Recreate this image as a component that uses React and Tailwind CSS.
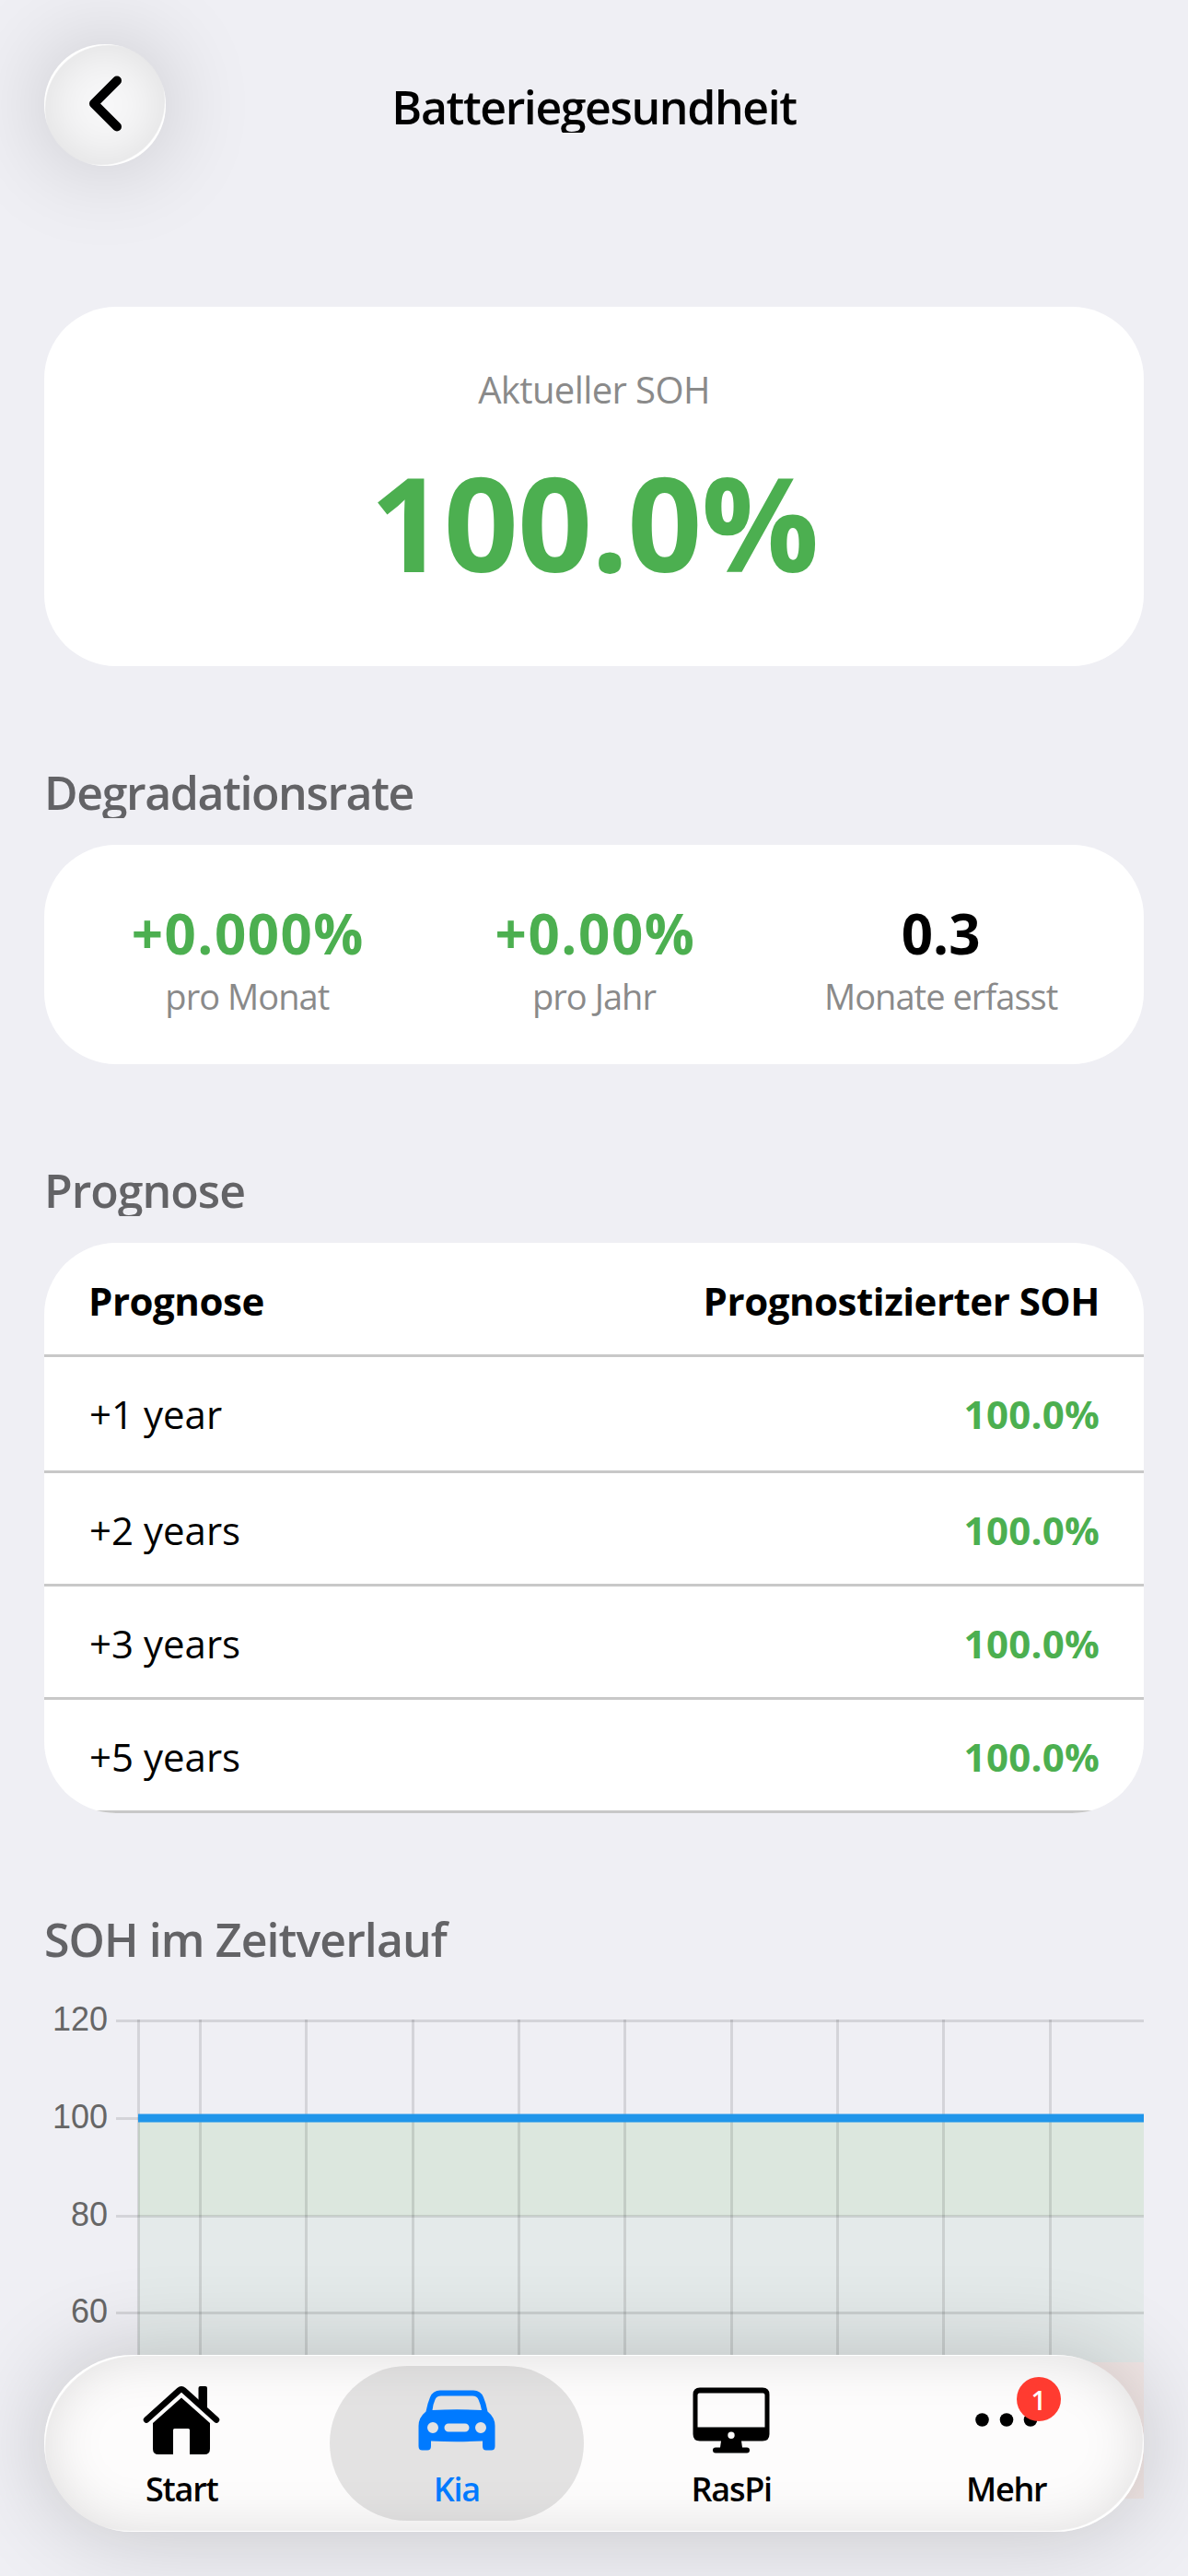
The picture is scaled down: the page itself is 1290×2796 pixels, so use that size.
const stats = [
  { value: '+0.000%', label: 'pro Monat', valueClass: 'text-[#4caf50] tracking-[0.025em] pl-[2px]' },
  { value: '+0.00%', label: 'pro Jahr', valueClass: 'text-[#4caf50] tracking-[0.026em] pl-[3px]' },
  { value: '0.3', label: 'Monate erfasst', valueClass: 'text-black' },
];

const forecast = [
  { term: '+1 year', soh: '100.0%', rowClass: 'h-[126px]' },
  { term: '+2 years', soh: '100.0%', rowClass: 'h-[123px] pt-[2px]' },
  { term: '+3 years', soh: '100.0%', rowClass: 'h-[123px] pt-[2px]' },
  { term: '+5 years', soh: '100.0%', rowClass: 'h-[123px] pt-[2px]' },
];

const yTicks = [
  { label: '120', y: 31.5 },
  { label: '100', y: 137.5 },
  { label: '80', y: 243.5 },
  { label: '60', y: 348.5 },
];

const xLines = [102.5, 169.5, 284.5, 400.5, 515.5, 630.5, 746.5, 861.5, 976.5, 1092.5];

function SectionTitle({ children, tracking = 'tracking-[-0.02em]' }) {
  return (
    <h2 className={`mt-[109px] mb-[29px] h-[56px] overflow-hidden text-[50px] font-semibold leading-[56px] text-[#636366] ${tracking}`}>
      {children}
    </h2>
  );
}

function SohChart() {
  return (
    <svg className="block" width="1194" height="550" viewBox="0 0 1194 550">
      {/* good / fair / poor zones */}
      <rect x="102" y="137" width="1092" height="106" fill="#dce7de" />
      <rect x="102" y="243" width="1092" height="159" fill="#e4eaea" />
      <rect x="102" y="402" width="1092" height="148" fill="#f2e7e6" />
      <g stroke="#000" strokeOpacity="0.11" strokeWidth="3">
        {yTicks.map((t) => (
          <line key={t.label} x1="78" x2="1194" y1={t.y} y2={t.y} />
        ))}
        {xLines.map((x) => (
          <line key={x} x1={x} x2={x} y1="30" y2="550" />
        ))}
      </g>
      {yTicks.map((t) => (
        <text
          key={t.label}
          x="69"
          y={t.y + 10}
          textAnchor="end"
          fill="#666"
          className="font-['Liberation_Sans',Arial,sans-serif] text-[36px]"
        >
          {t.label}
        </text>
      ))}
      <rect x="102" y="132.5" width="1092" height="9" fill="#2196ea" />
    </svg>
  );
}

function HomeIcon() {
  return (
    <svg width="84" height="76" viewBox="0 0 84 76">
      <path d="M4 37.500 L39.500 5.500 Q42 3.200 44.500 5.500 L80 37.500" fill="none" stroke="#000" strokeWidth="6.500" strokeLinecap="round" strokeLinejoin="round" />
      <path d="M60.500 3 Q60.500 1 62.500 1 H68 Q70 1 70 3 V28 L60.500 19 Z" />
      <path d="M42 13.500 L73 41 V69 Q73 75 67 75 H51 V48.500 Q51 47 49.500 47 H34.500 Q33 47 33 48.500 V75 H17 Q11 75 11 69 V41 Z" />
    </svg>
  );
}

function CarIcon() {
  return (
    <svg width="84" height="66" viewBox="0 0 84 66">
      <path
        fill="currentColor"
        fillRule="evenodd"
        d="M24 .5 H60 Q68 .5 71 8 Q74 15 75.500 23.500 Q83.500 30 83.500 39 V61 Q83.500 65.500 79.500 65.500 H74 Q70 65.500 70 61 V55.500 Q42 57 14 55.500 V61 Q14 65.500 10 65.500 H4.500 Q.5 65.500 .5 61 V39 Q.5 30 8.500 23.500 Q10 15 13 8 Q16 .5 24 .5 Z M25 6.500 Q20 6.500 18.500 10.500 Q16 16 15.500 22 Q42 20.500 69 22 Q68 16 65.500 10.500 Q64 6.500 59 6.500 Z M16 35 A6 6 0 1 0 16 47 A6 6 0 1 0 16 35 Z M68 35 A6 6 0 1 0 68 47 A6 6 0 1 0 68 35 Z M33 36.500 A4.500 4.500 0 0 0 33 45.500 H51 A4.500 4.500 0 0 0 51 36.500 Z"
      />
    </svg>
  );
}

function MonitorIcon() {
  return (
    <svg width="84" height="72" viewBox="0 0 84 72">
      <path
        fillRule="evenodd"
        d="M8 .5 H76 Q83.500 .5 83.500 8 V51 Q83.500 58.500 76 58.500 H53 L54 65.500 H59 Q62 65.500 62 68.500 Q62 71.500 59 71.500 H25 Q22 71.500 22 68.500 Q22 65.500 25 65.500 H30 L31 58.500 H8 Q.5 58.500 .5 51 V8 Q.5 .5 8 .5 Z M7.500 6.500 Q5.500 6.500 5.500 8.500 V43.500 H78.500 V8.500 Q78.500 6.500 76.500 6.500 Z M42 48.500 A3.700 3.700 0 1 0 42 55.900 A3.700 3.700 0 1 0 42 48.500 Z"
      />
    </svg>
  );
}

function MoreIcon() {
  return (
    <svg width="84" height="72" viewBox="0 0 84 72">
      <circle cx="15.500" cy="35.500" r="7.300" />
      <circle cx="42" cy="35.500" r="7.300" />
      <circle cx="68" cy="35.500" r="7.300" />
    </svg>
  );
}

const tabs = [
  { label: 'Start', icon: <HomeIcon /> },
  { label: 'Kia', icon: <CarIcon />, active: true },
  { label: 'RasPi', icon: <MonitorIcon /> },
  { label: 'Mehr', icon: <MoreIcon />, badge: '1' },
];

function TabBar() {
  return (
    <nav className="absolute bottom-[48px] left-[48px] flex h-[192px] w-[1194px] rounded-full bg-[#fdfcfc] shadow-[inset_4px_4px_1px_-3px_#fff,inset_-4px_-4px_1px_-3px_#fff,inset_0_0_60px_rgba(0,0,0,0.13),0_0_100px_rgba(0,0,0,0.19)]">
      {tabs.map((tab) => (
        <a
          key={tab.label}
          className={
            tab.active
              ? 'mx-[11px] my-[12px] flex flex-1 flex-col items-center rounded-full bg-black/10 text-[#007aff]'
              : 'mx-[11px] my-[12px] flex flex-1 flex-col items-center text-black'
          }
        >
          <span className="relative mt-[20px] flex h-[78px] items-center">
            {tab.icon}
            {tab.badge && (
              <span className="absolute -top-[8px] left-[53px] flex h-[48px] w-[48px] items-center justify-center rounded-full bg-[#ff3b30] text-[29px] font-semibold leading-none text-white">
                {tab.badge}
              </span>
            )}
          </span>
          <span className="mt-[12px] text-[36px] font-semibold leading-[48px] tracking-[-0.035em]">{tab.label}</span>
        </a>
      ))}
    </nav>
  );
}

function App() {
  return (
    <div className="relative h-[2796px] w-[1290px] overflow-hidden bg-[#efeff4] px-[48px] font-['Open_Sans','Noto_Sans',sans-serif] text-black">
      <header className="grid h-[180px] grid-cols-[132px_1fr_132px] pt-[48px]">
        <button className="flex h-[132px] w-[132px] items-center justify-center rounded-full bg-[#f8f8f9] shadow-[inset_4px_4px_1px_-3px_#fff,inset_-4px_-4px_1px_-3px_#fff,inset_0_0_60px_rgba(0,0,0,0.11),0_0_100px_rgba(0,0,0,0.18)]">
          <svg width="60" height="72" viewBox="0 0 60 72" fill="none">
            <path d="M43 9.500 L18 34.500 L43 59.500" stroke="#000" strokeWidth="10" strokeLinecap="round" strokeLinejoin="round" />
          </svg>
        </button>
        <h1 className="mt-[40px] h-[56px] overflow-hidden text-center text-[50px] font-semibold leading-[56px] tracking-[-0.028em]">
          Batteriegesundheit
        </h1>
      </header>

      <main>
        <section className="mt-[153px] flex h-[390px] flex-col items-center rounded-[78px] bg-white pt-[62px]">
          <p className="text-[40px] leading-[56px] tracking-[-0.015em] text-[#8a8a8a]">Aktueller SOH</p>
          <p className="mt-[30px] text-[142px] font-bold leading-[170px] tracking-[-0.008em] text-[#4caf50]">100.0%</p>
        </section>

        <SectionTitle tracking="tracking-[-0.028em]">Degradationsrate</SectionTitle>
        <section className="grid h-[238px] grid-cols-3 rounded-[78px] bg-white px-[32px] pt-[61px] text-center">
          {stats.map((s) => (
            <div key={s.label}>
              <p className={`text-[60px] font-bold leading-[70px] ${s.valueClass}`}>{s.value}</p>
              <p className="mt-[7px] text-[38px] leading-[52px] tracking-[-0.025em] text-[#8a8a8a]">{s.label}</p>
            </div>
          ))}
        </section>

        <SectionTitle>Prognose</SectionTitle>
        <section className="overflow-hidden rounded-[78px] bg-white text-[42px]">
          <div className="flex h-[124px] items-center justify-between border-b-[3px] border-[#c8c8c8] px-[48px] pt-[4px] font-bold tracking-[-0.011em]">
            <span>Prognose</span>
            <span>Prognostizierter SOH</span>
          </div>
          {forecast.map((row) => (
            <div key={row.term} className={`flex items-center justify-between border-b-[3px] border-[#c8c8c8] pr-[48px] pl-[49px] ${row.rowClass}`}>
              <span>{row.term}</span>
              <span className="font-bold tracking-[0.006em] text-[#4caf50]">{row.soh}</span>
            </div>
          ))}
        </section>

        <SectionTitle tracking="tracking-[-0.018em]">SOH im Zeitverlauf</SectionTitle>
        <SohChart />
      </main>

      <TabBar />
    </div>
  );
}

export default App;
